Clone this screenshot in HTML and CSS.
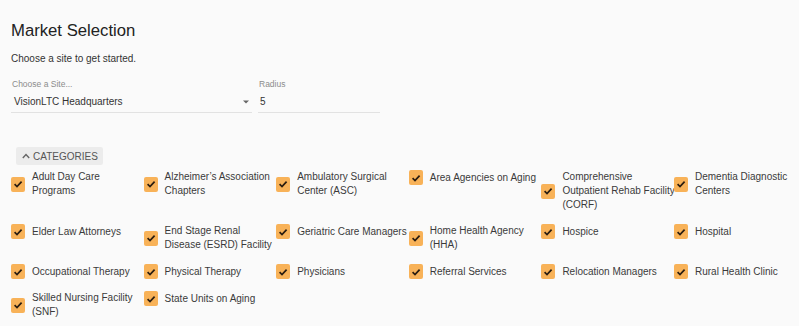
FILE: index.html
```html
<!DOCTYPE html>
<html lang="en">

<head>
    <meta charset="UTF-8">
    <meta name="viewport" content="width=device-width, initial-scale=1.0">
    <title>Market Selection</title>
    <link rel="stylesheet" href="styles.css">
</head>

<body>

    <div class="page">

        <h1 class="title">Market Selection</h1>
        <p class="intro">Choose a site to get started.</p>

        <div class="fields">
            <div class="field site">
                <label for="site">Choose a Site...</label>
                <div class="control" id="site">
                    <span>VisionLTC Headquarters</span>
                    <svg class="arrow" width="6" height="4" viewBox="0 0 6 4"><path d="M0 0.5 L6 0.5 L3 3.5 Z" fill="#666"/></svg>
                </div>
            </div>
            <div class="field radius">
                <label for="radius">Radius</label>
                <div class="control" id="radius"><span>5</span></div>
            </div>
        </div>

        <button class="toggle">
            <svg width="8" height="6" viewBox="0 0 8 6"><polyline points="0.8,5 4,1.6 7.2,5" fill="none" stroke="#666" stroke-width="1.4"/></svg>
            CATEGORIES
        </button>

        <div class="categories" id="categories"></div>
    </div>

    <script>
        // Kategori listesi
        const categories = [
            'Adult Day Care Programs',
            'Alzheimer\u2019s Association Chapters',
            'Ambulatory Surgical Center (ASC)',
            'Area Agencies on Aging',
            'Comprehensive Outpatient Rehab Facility (CORF)',
            'Dementia Diagnostic Centers',
            'Elder Law Attorneys',
            'End Stage Renal Disease (ESRD) Facility',
            'Geriatric Care Managers',
            'Home Health Agency (HHA)',
            'Hospice',
            'Hospital',
            'Occupational Therapy',
            'Physical Therapy',
            'Physicians',
            'Referral Services',
            'Relocation Managers',
            'Rural Health Clinic',
            'Skilled Nursing Facility (SNF)',
            'State Units on Aging'
        ];

        const list = document.getElementById('categories');
        categories.forEach(function (name) {
            const item = document.createElement('label');
            item.className = 'category';
            item.innerHTML =
                '<span class="box"><svg width="14" height="14" viewBox="0 0 14 14">' +
                '<polyline points="3.6,7.2 6,9.6 10.6,4.6" fill="none" stroke="#2b1d10" stroke-width="1.7"/></svg></span>' +
                '<span class="name"></span>';
            item.querySelector('.name').textContent = name;
            list.appendChild(item);
        });
    </script>

</body>

</html>
```

FILE: styles.css
```css
body {
    margin: 0;
    background-color: #fafafa;
    font-family: "Liberation Sans", Arial, sans-serif;
    color: #333;
}

.page {
    padding: 21px 0 0 11px;
}

.title {
    margin: 0;
    font-size: 16.7px;
    line-height: 20px;
    font-weight: normal;
    color: #222;
}

.intro {
    margin: 11px 0 0;
    font-size: 10px;
    line-height: 14px;
    color: #333;
}

.fields {
    display: flex;
    gap: 6px;
    margin-top: 12px;
}

.field label {
    display: block;
    padding-left: 1px;
    font-size: 8.5px;
    line-height: 12px;
    color: #8c8c8c;
}

.field .control {
    display: flex;
    justify-content: space-between;
    align-items: center;
    margin-top: 5px;
    padding: 0 3px 3px 3px;
    font-size: 10px;
    line-height: 14px;
    color: #333;
    border-bottom: 1px solid #e2e2e2;
}

.site {
    width: 241px;
}

.radius {
    width: 122px;
}

.radius .control {
    padding-left: 2px;
}

.toggle {
    display: flex;
    align-items: center;
    gap: 3px;
    margin: 34px 0 0 5px;
    padding: 0 5px 0 6px;
    height: 18px;
    font-family: inherit;
    font-size: 10px;
    color: #555;
    background-color: #ececec;
    border: none;
    border-radius: 2px;
}

.categories {
    display: grid;
    grid-template-columns: repeat(5, 132.6px) 1fr;
    row-gap: 12px;
    margin-top: 5px;
}

.category {
    display: flex;
    align-items: center;
    gap: 7px;
    align-self: start;
}

.category .box {
    flex: none;
    width: 14px;
    height: 15px;
    display: flex;
    align-items: center;
    justify-content: center;
    background-color: #f8b258;
    border-radius: 2px;
}

.category .name {
    flex: none;
    width: 113.5px;
    font-size: 10px;
    line-height: 14px;
    color: #3a3a3a;
}

.categories .category:nth-child(6n) .name {
    flex: 1;
    width: auto;
}
```
